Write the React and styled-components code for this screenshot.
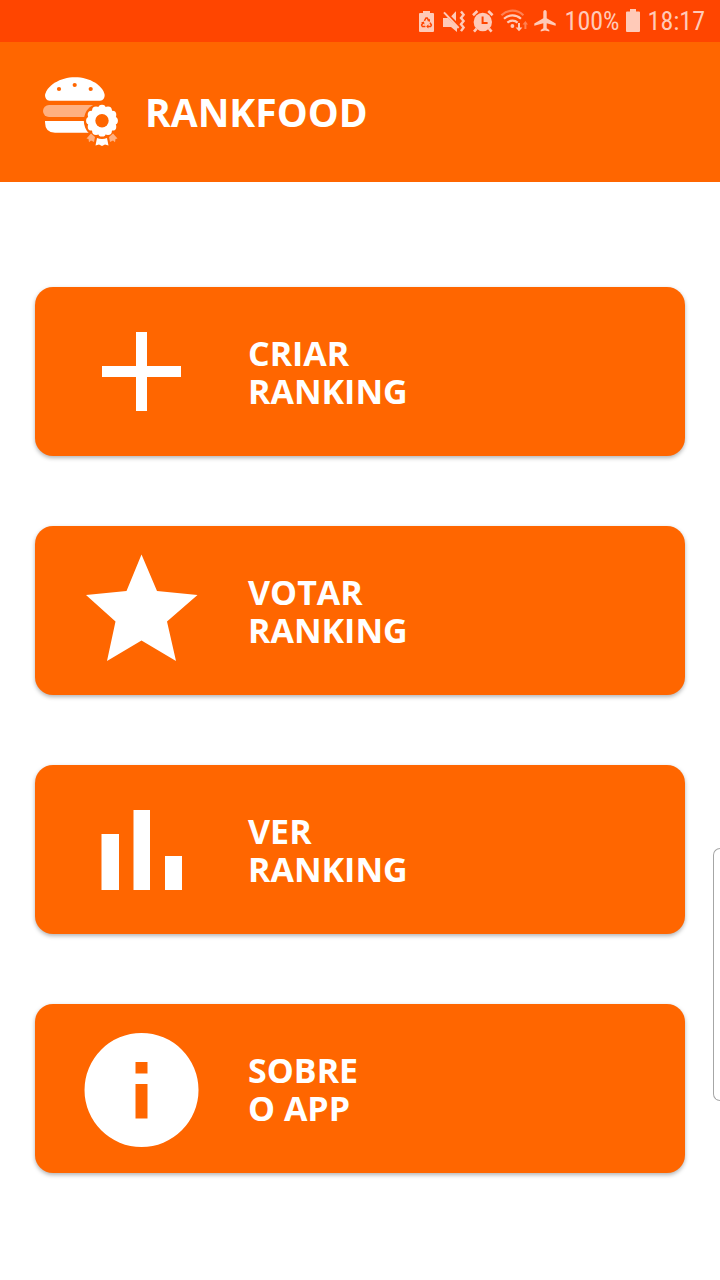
import React from "react";
import styled, { createGlobalStyle } from "styled-components";

const ORANGE = "#ff6600";
const STATUS_ORANGE = "#ff4500";
const STATUS_INK = "#ffcab8";
const PALE = "#ffb080";

const GlobalStyle = createGlobalStyle`
  *, *::before, *::after { box-sizing: border-box; }
  body {
    margin: 0;
    background: #ffffff;
    font-family: "Open Sans", "Noto Sans", sans-serif;
  }
`;

const Page = styled.div`
  display: flex;
  flex-direction: column;
  min-height: 100vh;
`;

const StatusBar = styled.div`
  display: flex;
  align-items: center;
  justify-content: flex-end;
  gap: 6px;
  height: 42px;
  padding: 0 15px;
  background: ${STATUS_ORANGE};
  color: ${STATUS_INK};
`;

const StatusTray = styled.div`
  display: flex;
  align-items: center;
  gap: 6px;
  margin-right: 3px;
`;

const StatusText = styled.span`
  font-family: "Roboto Condensed", "Liberation Sans Narrow", Roboto, sans-serif;
  font-size: 26px;
  line-height: 42px;
`;

const StatusIcon = styled.svg`
  display: block;
  flex: none;
  height: 24px;
  width: ${(p) => p.$w}px;
`;

const Header = styled.header`
  display: flex;
  align-items: center;
  gap: 26px;
  min-height: 140px;
  padding: 0 43px;
  background: ${ORANGE};
  color: #ffffff;
`;

const Logo = styled.svg`
  display: block;
  flex: none;
  width: 76px;
  height: 70px;
`;

const Title = styled.h1`
  margin: 0;
  font-size: 39px;
  line-height: 48px;
  font-weight: 700;
`;

const Menu = styled.nav`
  display: flex;
  flex-direction: column;
  gap: 70px;
  padding: 105px 35px;
`;

const MenuButton = styled.button`
  display: flex;
  align-items: center;
  gap: 38px;
  width: 100%;
  padding: 17px 39px 16px;
  border: 0;
  border-radius: 18px;
  background: ${ORANGE};
  box-shadow: 0 2px 4px rgba(0, 0, 0, 0.3);
  color: #ffffff;
  font: inherit;
  font-size: 34px;
  line-height: 38px;
  font-weight: 700;
  text-align: left;
  cursor: pointer;
`;

const MenuIcon = styled.svg`
  display: block;
  flex: none;
  width: 136px;
  height: 136px;
  fill: #ffffff;
`;

const MenuLabel = styled.span`
  white-space: pre-line;
`;

const EdgeHandle = styled.div`
  position: fixed;
  top: 848px;
  right: 0;
  width: 7px;
  height: 253px;
  border: 1px solid #a6a6a6;
  border-right: 0;
  border-radius: 9px 0 0 9px;
  background: #ffffff;
`;

const BatterySaverIcon = () => (
  <StatusIcon $w={18} viewBox="0 0 18 24" aria-hidden="true">
    <path fill={STATUS_INK} d="M5 2h7v2h3a1 1 0 0 1 1 1v17a1 1 0 0 1-1 1H2a1 1 0 0 1-1-1V5a1 1 0 0 1 1-1h3z" />
    <g fill="none" stroke={STATUS_ORANGE} strokeWidth="1.5">
      <path d="M6.4 11.8 8 9h1.2l1.4 2.4" />
      <path d="M12 13.6l1.4 2.4-.8 1.4H9.8" />
      <path d="M7.4 17.4H4.4L3.6 16 5 13.6" />
    </g>
    <path fill={STATUS_ORANGE} d="M12 9.8v3l-2.800-.8zM10.400 15.200v4.200l-2.200-2zM3 13.400l3-.8.5 2.800z" />
  </StatusIcon>
);

const MuteIcon = () => (
  <StatusIcon $w={24} viewBox="0 0 24 24" aria-hidden="true">
    <path fill={STATUS_INK} d="M1 9h5l9 9v5l-6-5H1zM9 7.4 13.6 2.5H14v10z" />
    <path fill="none" stroke={STATUS_ORANGE} strokeWidth="1.5" d="M3.4 2.6 16 15.4" />
    <path fill="none" stroke={STATUS_INK} strokeWidth="2" d="M2 3.4 16.6 19" />
    <path fill="none" stroke={STATUS_INK} strokeWidth="2.4" d="M19 2.5l2.600 3.200-2.600 3.200 2.600 3.200-2.600 3.200 2.600 3.200-2.600 3.600" />
  </StatusIcon>
);

const AlarmIcon = () => (
  <StatusIcon $w={22} viewBox="0 0 22 24" aria-hidden="true">
    <circle cx="10.8" cy="13" r="9.2" fill={STATUS_INK} />
    <path fill="none" stroke={STATUS_INK} strokeWidth="2.6" d="M1 6.2 5.4 2M20.6 6.2 16.2 2M4.6 19.6 2 22.6M17 19.6l2.6 3" />
    <path fill="none" stroke={STATUS_ORANGE} strokeWidth="2" d="M10.6 7.4V14h5" />
  </StatusIcon>
);

const WifiIcon = () => (
  <StatusIcon $w={28} viewBox="0 0 28 24" aria-hidden="true">
    <g fill="none" stroke={STATUS_INK} strokeWidth="2.2">
      <path opacity=".45" d="M1.4 6.2C8 .2 17 .2 23.4 6.2" />
      <path d="M4 9.8c5-4.6 12-4.6 17 0" />
      <path d="M7.4 13.6c3-2.6 7.4-2.6 10.2 0" />
    </g>
    <circle cx="12.4" cy="17" r="1.9" fill={STATUS_INK} />
    <path fill={STATUS_INK} d="M18 14h2v4.4h2.4L19 22.2l-3.4-3.8H18z" />
    <path fill={STATUS_INK} opacity=".45" d="M24.4 20h2v-4.4H28l-2.6-3.6-2.8 3.6h1.8z" />
  </StatusIcon>
);

const PlaneIcon = () => (
  <StatusIcon $w={22} viewBox="0 0 22 24" aria-hidden="true">
    <path
      fill={STATUS_INK}
      d="M11 1c-1.100 0-1.700 1-1.700 2.200v6L.3 14.600v2.200l9-2.600v5l-2.600 1.900v1.500l4.300-1.100 4.300 1.100v-1.500l-2.600-1.900v-5l9 2.600v-2.200l-9-5.400v-6C12.700 2 12.100 1 11 1z"
    />
  </StatusIcon>
);

const BatteryIcon = () => (
  <StatusIcon $w={16} viewBox="0 0 16 24" aria-hidden="true">
    <path fill={STATUS_INK} d="M4 0h6v2.500h3a1 1 0 0 1 1 1V22a1 1 0 0 1-1 1H1a1 1 0 0 1-1-1V3.500a1 1 0 0 1 1-1h3z" />
  </StatusIcon>
);

const SCALLOPS = Array.from({ length: 12 }, (_, i) => {
  const angle = (i * Math.PI) / 6;
  return { x: 59 + 12 * Math.sin(angle), y: 43.7 - 12 * Math.cos(angle) };
});

const BurgerLogo = () => (
  <Logo viewBox="0 0 76 70" aria-hidden="true">
    <path fill="#fff" d="M6.5 23.700Q2 23.200 2 18C4 8.500 17 .3 32 .3S60 8.500 61.700 18Q61.700 23.200 57 23.700z" />
    <circle cx="16" cy="12" r="2.100" fill={ORANGE} />
    <circle cx="31.700" cy="8" r="2.100" fill={ORANGE} />
    <circle cx="47.700" cy="12" r="2.100" fill={ORANGE} />
    <path fill={PALE} d="M6 28h46v12H6a6 6 0 0 1 0-12z" />
    <path fill="#fff" d="M2 44h48v11.700H12Q2 55.700 2 45z" />
    <circle cx="59" cy="43.700" r="18.200" fill={ORANGE} />
    <path fill={PALE} d="M48 56.500 52 60l-1 5-3-1.500-2 1.800-.5-3.300-2-.500zM70 56.500 66 60l1 5 3-1.500 2 1.800.5-3.300 2-.500z" />
    <path fill="#fff" d="M54 61q5 2 10 0l1.500 7.500-3.500-1-3 1.500-3-1.500-3.500 1z" />
    <circle cx="59" cy="43.700" r="14" fill="#fff" />
    {SCALLOPS.map((s, i) => (
      <circle key={i} cx={s.x} cy={s.y} r="3.900" fill="#fff" />
    ))}
    <circle cx="59" cy="43.700" r="6.700" fill={ORANGE} />
  </Logo>
);

const ITEMS = [
  {
    label: "CRIAR\nRANKING",
    icon: <path d="M62 28h11v34h34v11H73v34H62V73H28V62h34z" />,
  },
  {
    label: "VOTAR\nRANKING",
    icon: <path d="M67.5 11.5 83 48l40.500 4L93 78.500l9 39.500-34.500-20.500L33 118l8.500-39.500L12 52l40.500-4z" />,
  },
  {
    label: "VER\nRANKING",
    icon: <path d="M27.5 52H45v56H27.5zM59.5 28H76v80H59.5zM91 74h17v34H91z" />,
  },
  {
    label: "SOBRE\nO APP",
    icon: (
      <path
        fillRule="evenodd"
        d="M67.5 12a57 57 0 1 1 0 114 57 57 0 0 1 0-114zM61.5 41v11.500h12V41zM61.5 63v34.500h12V63z"
      />
    ),
  },
];

export default function App() {
  return (
    <Page>
      <GlobalStyle />
      <StatusBar>
        <StatusTray>
          <BatterySaverIcon />
          <MuteIcon />
          <AlarmIcon />
          <WifiIcon />
          <PlaneIcon />
        </StatusTray>
        <StatusText>100%</StatusText>
        <BatteryIcon />
        <StatusText>18:17</StatusText>
      </StatusBar>
      <Header>
        <BurgerLogo />
        <Title>RANKFOOD</Title>
      </Header>
      <Menu>
        {ITEMS.map(({ label, icon }) => (
          <MenuButton key={label} type="button">
            <MenuIcon viewBox="0 0 136 136" aria-hidden="true">
              {icon}
            </MenuIcon>
            <MenuLabel>{label}</MenuLabel>
          </MenuButton>
        ))}
      </Menu>
      <EdgeHandle />
    </Page>
  );
}
